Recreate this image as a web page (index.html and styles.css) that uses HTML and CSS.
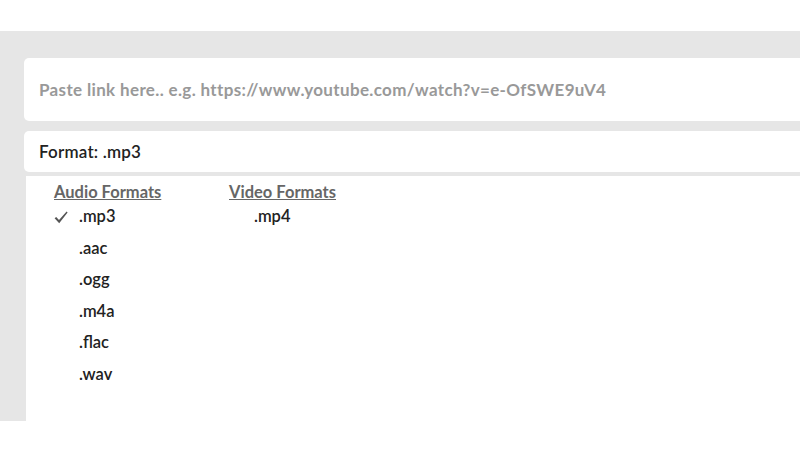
FILE: index.html
```html
<!DOCTYPE html>
<html lang="en">
<head>
    <meta charset="UTF-8">
    <meta name="viewport" content="width=device-width, initial-scale=1.0">
    <title>Converter</title>
    <link rel="stylesheet" href="styles.css">
</head>
<body>
    <div class="topbar"></div>

    <div class="converter">
        <div class="card link-field">
            <span class="placeholder">Paste link here.. e.g. https://www.youtube.com/watch?v=e-OfSWE9uV4</span>
        </div>

        <div class="card format-select">
            <span>Format: .mp3</span>
        </div>

        <div class="format-menu">
            <div class="format-group">
                <p class="group-title">Audio Formats</p>
                <ul>
                    <li class="selected">
                        <svg class="check" width="14" height="13" viewBox="0 0 14 13">
                            <path d="M0.6 7.2 L2.2 5.9 L5 9.1 L12.6 0.6 L13.6 1.5 L5.2 12.2 Z" fill="#555"/>
                        </svg>
                        .mp3
                    </li>
                    <li>.aac</li>
                    <li>.ogg</li>
                    <li>.m4a</li>
                    <li>.flac</li>
                    <li>.wav</li>
                </ul>
            </div>
            <div class="format-group">
                <p class="group-title">Video Formats</p>
                <ul>
                    <li>.mp4</li>
                </ul>
            </div>
        </div>
    </div>
</body>
</html>
```

FILE: styles.css
```css
body {
    margin: 0;
    font-family: Lato, "Open Sans", sans-serif;
    color: #222;
    overflow: hidden;
}

.topbar {
    height: 31px;
    background: #fff;
}

.converter {
    background: #e6e6e6;
    height: 390px;
    padding: 27px 0 0 24px;
    box-sizing: border-box;
    display: flex;
    flex-direction: column;
    overflow: hidden;
}

.card {
    background: #fff;
    border-radius: 5px;
    width: calc(100% + 20px);
    padding-left: 15px;
    box-sizing: border-box;
    display: flex;
    align-items: center;
    font-size: 17px;
}

.link-field {
    height: 63px;
    margin-bottom: 10px;
}

.placeholder {
    color: #999;
    font-weight: 700;
    letter-spacing: 0.35px;
}

.format-select {
    height: 41px;
    font-weight: 600;
    letter-spacing: 0.2px;
}

.format-menu {
    flex: 1;
    background: #fff;
    margin: 4px 0 0 2px;
    width: calc(100% + 20px);
    padding: 6px 0 0 28px;
    display: flex;
    box-sizing: border-box;
}

.format-group {
    width: 175px;
}

.group-title {
    margin: 0;
    color: #666;
    font-size: 16.5px;
    font-weight: 700;
    text-decoration: underline;
    line-height: 20px;
}

.format-group ul {
    list-style: none;
    margin: -1px 0 0;
    padding: 0 0 0 25px;
}

.format-group li {
    position: relative;
    font-size: 16.5px;
    font-weight: 600;
    line-height: 31.6px;
}

.check {
    position: absolute;
    left: -25px;
    top: 10px;
}
```
